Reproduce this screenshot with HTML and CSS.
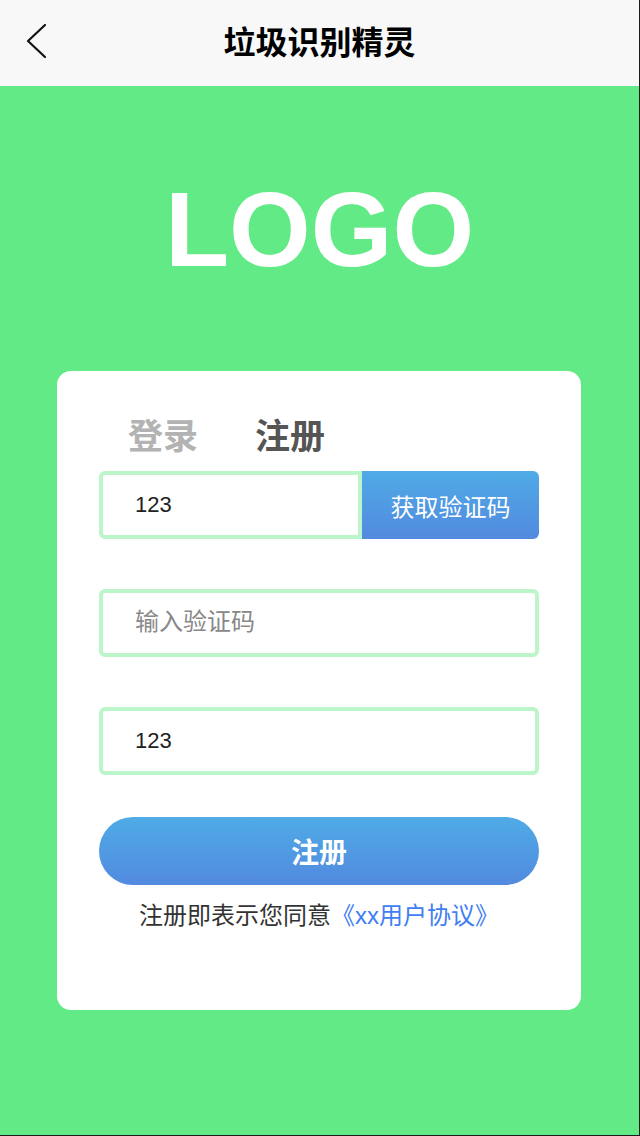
FILE: index.html
```html
<!DOCTYPE html>
<html lang="zh-CN">
<head>
<meta charset="utf-8">
<title>垃圾识别精灵</title>
<link rel="stylesheet" href="styles.css">
</head>
<body>
<div class="page">
  <header class="header">
    <button class="back" aria-label="返回">
      <svg width="24" height="36" viewBox="0 0 24 36"><polyline points="20,2 3,18 20,34" fill="none" stroke="#111" stroke-width="2.2" stroke-linecap="round" stroke-linejoin="round"/></svg>
    </button>
    <h1 class="title">垃圾识别精灵</h1>
  </header>
  <div class="logo">LOGO</div>
  <main class="card">
    <div class="tabs">
      <span class="tab">登录</span>
      <span class="tab active">注册</span>
    </div>
    <div class="row">
      <input class="field field-left" type="text" value="123">
      <button class="code-btn">获取验证码</button>
    </div>
    <div class="row">
      <input class="field" type="text" placeholder="输入验证码">
    </div>
    <div class="row row-last">
      <input class="field" type="text" value="123">
    </div>
    <button class="submit">注册</button>
    <p class="agree">注册即表示您同意<a class="link">《xx用户协议》</a></p>
  </main>
</div>
</body>
</html>
```
FILE: styles.css
```css
* { box-sizing: border-box; }
html, body { margin: 0; padding: 0; }
body {
  font-family: "Liberation Sans", "Noto Sans CJK SC", sans-serif;
  background: #61ea85;
}
.page {
  width: 640px;
  height: 1136px;
  background: #61ea85;
  border-right: 1px solid #1c1c1c;
  border-bottom: 1px solid #1c1c1c;
  display: flex;
  flex-direction: column;
  align-items: center;
}
.header {
  width: 100%;
  height: 86px;
  background: #f8f8f8;
  display: flex;
  align-items: center;
  justify-content: center;
  position: relative;
}
.back {
  position: absolute;
  left: 25px;
  top: 23px;
  padding: 0;
  border: 0;
  background: none;
  display: flex;
}
.title {
  margin: 0;
  font-size: 32px;
  font-weight: bold;
  color: #000;
  line-height: 40px;
}
.logo {
  margin-top: 91px;
  font-size: 105px;
  line-height: 1;
  font-weight: bold;
  color: #fff;
  font-family: "Liberation Sans", Arial, sans-serif;
}
.card {
  align-self: flex-start;
  margin: 89px 0 0 57px;
  width: 524px;
  height: 639px;
  background: #fff;
  border-radius: 14px;
  padding: 41px 42px 0;
  display: flex;
  flex-direction: column;
}
.tabs {
  display: flex;
  gap: 57px;
  padding-left: 29px;
  height: 50px;
  align-items: center;
  margin-bottom: 9px;
}
.tab {
  font-size: 35px;
  font-weight: bold;
  color: #b3b3b3;
  line-height: 50px;
}
.tab.active { color: #555; }
.row {
  display: flex;
  height: 68px;
  margin-bottom: 50px;
}
.row-last { margin-bottom: 42px; }
.field {
  flex: 1;
  min-width: 0;
  height: 68px;
  border: 4px solid #bdf5cb;
  border-radius: 6px;
  padding: 0 0 0 32px;
  font-family: "Liberation Sans", "Noto Sans CJK SC", sans-serif;
  font-size: 22px;
  color: #222;
  outline: none;
  background: #fff;
}
.field::placeholder {
  font-size: 24px;
  color: #888;
}
.field-left { border-radius: 6px 0 0 6px; }
.code-btn {
  width: 177px;
  height: 68px;
  border: 0;
  border-radius: 0 6px 6px 0;
  background: linear-gradient(#4fabe6, #5289df);
  color: #fff;
  font-family: "Liberation Sans", "Noto Sans CJK SC", sans-serif;
  font-size: 24px;
  padding: 0;
}
.submit {
  width: 100%;
  height: 68px;
  border: 0;
  border-radius: 34px;
  background: linear-gradient(#4fabe6, #5289df);
  color: #fff;
  font-family: "Liberation Sans", "Noto Sans CJK SC", sans-serif;
  font-size: 28px;
  font-weight: bold;
  padding: 0;
}
.agree {
  margin: 14px 0 0;
  text-align: center;
  font-size: 24px;
  line-height: 34px;
  color: #333;
}
.link { color: #3f7ef3; }
```
